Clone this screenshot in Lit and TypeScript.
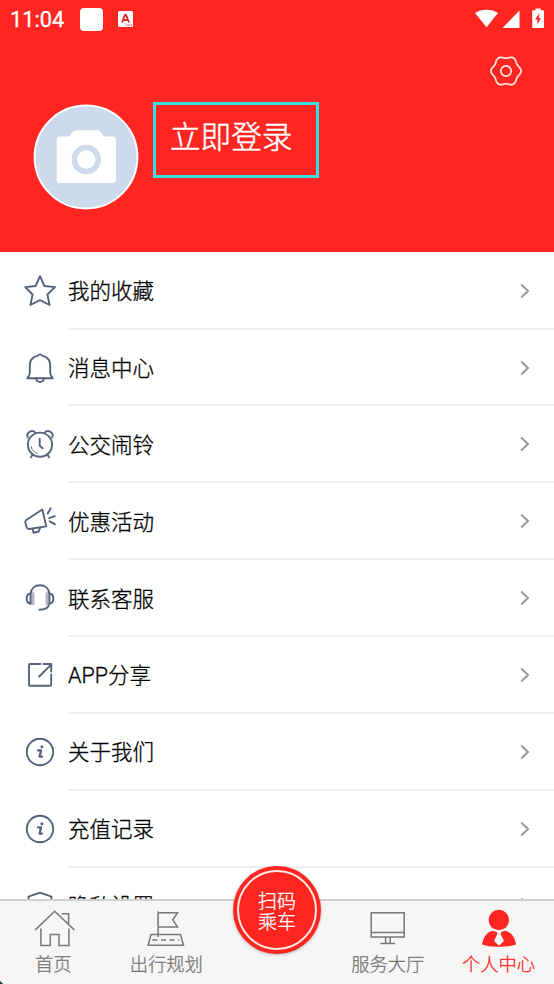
import { LitElement, html, css, svg } from "lit";
import { customElement, property } from "lit/decorators.js";

const gearPath = (() => {
  const pts: string[] = [];
  for (let i = 0; i < 120; i++) {
    const a = (i / 120) * Math.PI * 2;
    const r = 13.9 + 1.1 * Math.cos(6 * a);
    pts.push(`${(17 + r * Math.cos(a)).toFixed(2)} ${(17 + r * Math.sin(a)).toFixed(2)}`);
  }
  return `M${pts.join("L")}Z`;
})();

const info = svg`
  <circle cx="16" cy="16" r="13.2" />
  <circle class="solid" cx="17.9" cy="10.8" r="1.5" />
  <path d="M14 14.4H17L15.6 20.6H18" stroke-width="2.3" />`;

const rowIcons: Record<string, unknown> = {
  star: svg`<path d="M16 1.2L20.4 11 31 12.1 23.4 19.5 25.6 30 16 25.2 6.4 30 8.6 19.5 1.3 12.1 11.6 11Z" />`,
  bell: svg`
    <path d="M13.5 3.9Q16 .9 18.5 3.9C23.8 5 26.2 8.8 26.2 13.6V20.5Q26.4 23.6 28.7 26.2H3.3Q5.6 23.6 5.8 20.5V13.6C5.8 8.8 8.2 5 13.5 3.9Z" />
    <path d="M12 26.4Q12.6 30 16 30T20 26.4" />`,
  clock: svg`
    <circle cx="16" cy="16.7" r="12.1" />
    <path d="M3.8 9.3C1.7 5 8.2.4 11.4 4.8M28.2 9.3C30.3 5 23.8.4 20.6 4.8M8.6 26.4L7 29.2M23.4 26.4L25 29.2M15.7 10.6V17.6L18.6 20.2" />
    <path d="M7 18.5Q8.4 23.8 13.4 25.4" stroke-width="1" stroke-dasharray="3 1.5" />`,
  horn: svg`
    <path d="M18.3 4.5L22.3 21.4 5 24Q3.2 24.1 2.6 22L1.4 18Q.9 15.8 2.6 14.8Z" />
    <path d="M8.7 23.8L9.4 27.7 14.6 26.6 16.2 22.6M23.7 8.5L26.7 3.3M25.2 13.1L30.8 11.1M25.7 16.3L30.8 19.2" />`,
  headset: svg`
    <path d="M6.6 11.5C7.2 6.2 11 3.2 16 3.2S24.8 6.2 25.4 11.5" />
    <path d="M6.6 11.5C1.3 12 1.3 21.2 6.6 21.8ZM25.4 11.5C30.7 12 30.7 21.2 25.4 21.8ZM25.4 21.8C24.5 26 21 27.8 15.5 27.8" />
    <path d="M9 11.5V21.8M23 11.5V21.8" stroke-width="3" opacity=".45" />`,
  share: svg`
    <path d="M16.5 5H6Q5 5 5 6V25.7Q5 26.7 6 26.7H26.2Q27.2 26.7 27.2 25.7V15.5M15.2 17.5L26.8 5.8M19.5 5H27.2V12.6" />`,
  info,
  shield: svg`<path d="M16 3.7L27.5 7.7V17Q27 25 16 29Q5 25 4.5 17V7.7Z" />`,
};

const tabIcons: Record<string, unknown> = {
  home: svg`<path d="M2.3 21.9L21.7 3.2 41.3 21.9M28.8 5.8H35.6V15.4M7.9 20.5V37.6H17.3V26.4H26V37.6H35.9V20.5" />`,
  route: svg`
    <path d="M14.1 3.2V29M14.1 4.8H33.5L28.8 11.8 33.5 19H14.1M7.1 26.4H36.5L39.5 37.3H4.1Z" />
    <path d="M8.4 32H35.5" stroke-dasharray="5 3.6" />`,
  hall: svg`
    <rect x="5.2" y="4.8" width="33" height="24.2" />
    <path d="M5.2 24.4H38.2M19.6 29V35.3M24.2 29V35.3M14.5 35.5H29" />`,
  me: svg`
    <circle class="solid" cx="21.8" cy="12" r="10.2" />
    <path class="solid" d="M15.4 22.8Q21.8 25.4 28.2 22.8C34.5 24.2 37.7 29 39.1 36.6Q31 39.2 22 38.8Q12 39.2 5 36.4C6.5 29 9.8 24.2 15.4 22.8Z" />
    <path class="tie" d="M19.6 22.6H24.4L23.8 26.4 27 33 22 37.8 17 33 20.2 26.4Z" />`,
};

@customElement("menu-row")
class MenuRow extends LitElement {
  @property() icon = "";
  @property() label = "";
  static styles = css`
    :host { display: flex; height: 76.85px; padding-left: 24px; flex: none; }
    .icon { width: 32px; height: 32px; margin-top: 21.9px; flex: none; fill: none; stroke: #56627c; stroke-width: 1.9; stroke-linejoin: round; stroke-linecap: round; }
    .solid { fill: #56627c; stroke: none; }
    .body { flex: 1; margin-left: 12px; display: flex; align-items: center; justify-content: space-between; box-sizing: border-box; border-bottom: 2px solid #efefef; padding: 1px 24px 0 0; }
    .label { padding-top: 3px; }
    .chev { width: 10px; height: 16px; fill: none; stroke: #999; stroke-width: 2; }
  `;
  render() {
    return html`<svg class="icon" viewBox="0 0 32 32">${rowIcons[this.icon]}</svg>
      <div class="body"><span class="label">${this.label}</span>
      <svg class="chev" viewBox="0 0 10 16"><path d="M1.2 1.6L8 8 1.2 14.4" /></svg></div>`;
  }
}

@customElement("tab-item")
class TabItem extends LitElement {
  @property() icon = "";
  @property() label = "";
  static styles = css`
    :host { display: flex; flex-direction: column; align-items: center; flex: 1; padding-top: 7px; }
    svg { width: 44px; height: 40px; fill: none; stroke: currentColor; stroke-width: 1.5; }
    .solid { fill: currentColor; stroke: none; }
    .tie { fill: #f6f6f6; stroke: none; }
    .label { font-size: 18.3px; line-height: 26px; margin-top: 4px; white-space: pre; }
  `;
  render() {
    return html`<svg viewBox="0 0 44 40">${tabIcons[this.icon]}</svg><span class="label">${this.label}</span>`;
  }
}

@customElement("app-root")
class AppRoot extends LitElement {
  static styles = css`
    :host { display: flex; flex-direction: column; height: 984px; width: 554px; overflow: hidden; position: relative; background: #fff; color: #000; font: 300 21.5px/32px Roboto, "Noto Sans CJK SC", sans-serif; -webkit-text-stroke: .3px currentColor; }
    .header { height: 252px; flex: none; background: #ff2622; color: #fff; display: flex; flex-direction: column; }
    .status { height: 38px; display: flex; align-items: center; padding: 0 9px 0 10px; box-sizing: border-box; }
    .time { font-size: 21.8px; font-weight: 400; width: 70px; padding-top: 1px; }
    .square { width: 23px; height: 23px; border-radius: 4px; background: #fff; }
    .note { width: 15px; height: 16px; margin-left: 15px; }
    .sys { margin-left: auto; width: 70px; height: 22px; fill: #fff; }
    .tools { display: flex; justify-content: flex-end; padding: 16px 31px 0 0; }
    .gear { width: 34px; height: 34px; fill: none; stroke: #ffe0dc; stroke-width: 1.8; }
    .profile { display: flex; padding: 14px 0 0 33px; }
    .avatar { width: 106px; height: 106px; margin-top: 2px; }
    .login { box-sizing: border-box; width: 166px; height: 76px; margin-left: 14px; border: 3px solid #36dfe2; padding: 10px 0 0 14px; font-size: 30.6px; line-height: 46px; white-space: nowrap; -webkit-text-stroke-width: .5px; }
    .list { height: 647px; box-sizing: border-box; padding-top: .8px; flex: none; overflow: hidden; display: flex; flex-direction: column; }
    .bar { height: 85px; box-sizing: border-box; border-top: 2px solid #d2d2d2; background: #f6f6f6; display: flex; color: #777; }
    .active { color: #ff2622; }
    .gap { flex: 1; }
    .scan { position: absolute; left: 233px; top: 866px; width: 88px; height: 88px; border-radius: 50%; background: #ff2622; box-sizing: border-box; padding: 4px; box-shadow: 0 1px 3px #0004; }
    .ring { height: 100%; box-sizing: border-box; border: 2px solid #ffeae4; border-radius: 50%; display: flex; flex-direction: column; align-items: center; justify-content: center; color: #fff; font-size: 19px; line-height: 21px; padding-top: 4px; }
    .corner { position: absolute; left: 0; top: 981px; width: 3px; height: 3px; background: #123443; clip-path: polygon(0 0, 100% 100%, 0 100%); }
  `;
  render() {
    const rows = [
      ["star", "我的收藏"], ["bell", "消息中心"], ["clock", "公交闹铃"],
      ["horn", "优惠活动"], ["headset", "联系客服"], ["share", "APP分享"],
      ["info", "关于我们"], ["info", "充值记录"], ["shield", "隐私设置"],
    ];
    return html`
      <div class="header">
        <div class="status">
          <span class="time">11:04</span><span class="square"></span>
          <svg class="note" viewBox="0 0 15 16"><rect width="15" height="16" rx="1.5" fill="#fff" /><path d="M4 11.5L7 4H8L11 11.5M5 9H10" fill="none" stroke="#e0282a" stroke-width="1.8" /><path d="M8 14H14" stroke="#e0282a" stroke-dasharray="1.4 .8" /></svg>
          <svg class="sys" viewBox="0 0 70 22">
            <path d="M0 5C6 .5 17 .5 23 5L11.6 19.3ZM28 20V19.5L44.5 2.5V20Z" />
            <path fill-rule="evenodd" d="M60.5 .5H65.5V2.3H68Q69 2.3 69 3.3V19Q69 20 68 20H58.2Q57.2 20 57.2 19V3.3Q57.2 2.3 58.2 2.3H60.5ZM64.5 5L60 11.5H62.3V16.5L66 10H63.8Z" />
          </svg>
        </div>
        <div class="tools"><svg class="gear" viewBox="0 0 34 34"><path d=${gearPath} /><circle cx="17" cy="17" r="5.2" /></svg></div>
        <div class="profile">
          <svg class="avatar" viewBox="0 0 106 106">
            <circle cx="53" cy="53" r="51.4" fill="#cddaeb" stroke="#fff" stroke-width="2" />
            <path d="M27 32.5H36L39.5 28Q41 26.3 43 26.3H64Q66 26.3 67.5 28L71 32.5H79.5Q83 32.5 83 36V75.5Q83 79 79.5 79H27Q23.7 79 23.7 75.5V36Q23.7 32.5 27 32.5Z" fill="#fff" />
            <circle cx="53.3" cy="55.5" r="12" fill="none" stroke="#cddaeb" stroke-width="5.4" />
          </svg>
          <div class="login">立即登录</div>
        </div>
      </div>
      <div class="list">${rows.map(([i, l]) => html`<menu-row icon=${i} label=${l}></menu-row>`)}</div>
      <div class="bar">
        <tab-item icon="home" label="首页 "></tab-item>
        <tab-item icon="route" label="出行规划"></tab-item>
        <div class="gap"></div>
        <tab-item icon="hall" label="服务大厅"></tab-item>
        <tab-item class="active" icon="me" label="个人中心"></tab-item>
      </div>
      <div class="scan"><div class="ring"><span>扫码</span><span>乘车</span></div></div>
      <div class="corner"></div>
    `;
  }
}
